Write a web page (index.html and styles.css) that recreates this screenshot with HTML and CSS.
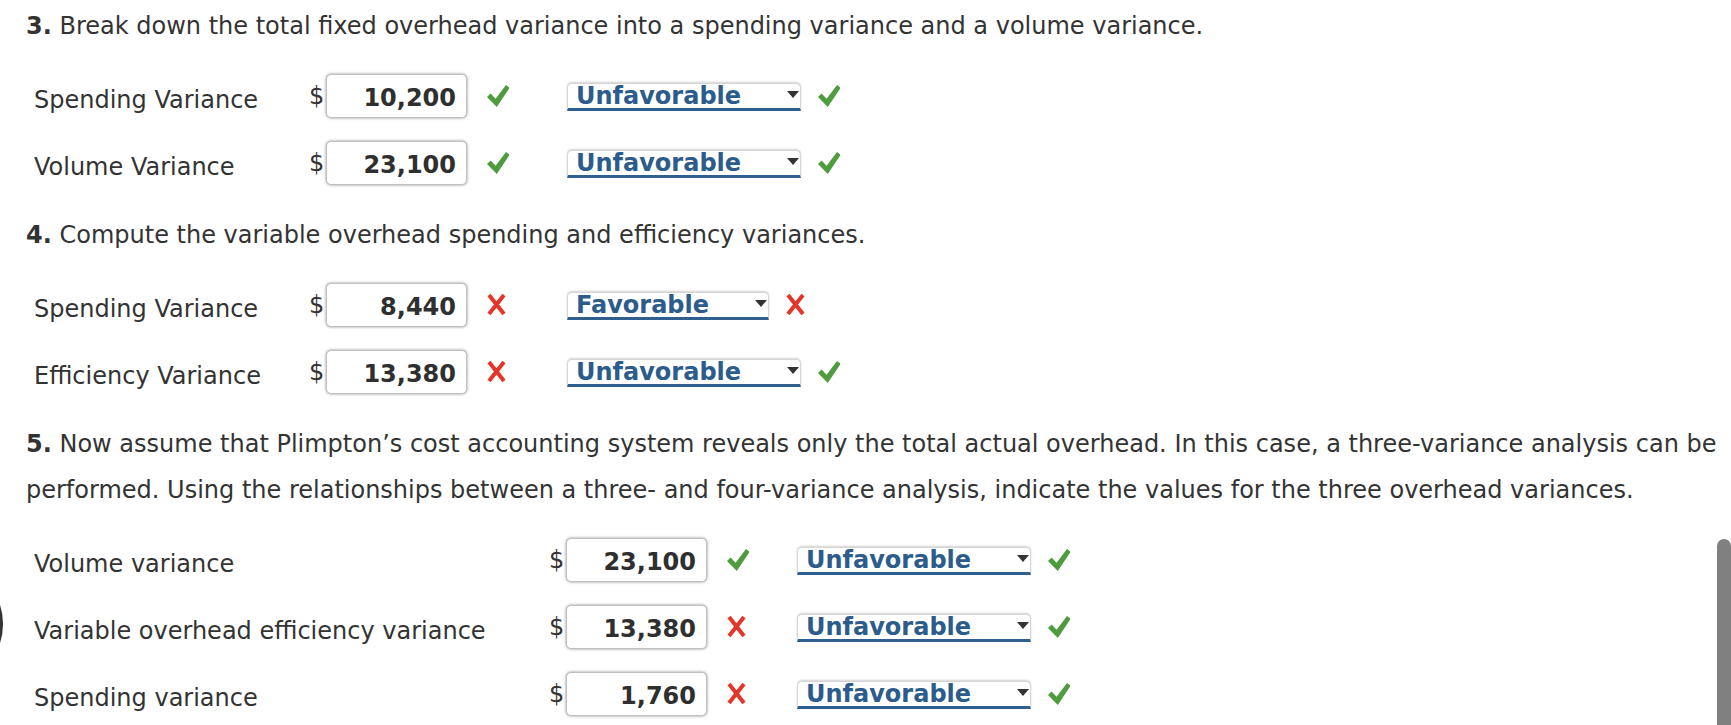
FILE: index.html
```html
<!DOCTYPE html>
<html lang="en">
<head>
<meta charset="utf-8">
<title>Variance analysis</title>
<link rel="stylesheet" href="styles.css">
</head>
<body>
<div class="cutoff"></div>
<div class="thumb"></div>
<div class="page">
  <p class="q"><b>3.</b> Break down the total fixed overhead variance into a spending variance and a volume variance.</p>
  <div class="rows s34">
    <div class="row">
      <span class="label">Spending Variance</span>
      <span class="cur">$</span>
      <span class="num">10,200</span>
      <span class="mark"><svg class="ok" viewBox="0 0 22 22"><polygon points="0,12 3.6,8.6 8.6,13.8 19,0 22.6,2.8 9.8,22"/></svg></span>
      <span class="sel"><span class="sel-text">Unfavorable</span><span class="arrow"></span></span>
      <span class="mark post"><svg class="ok" viewBox="0 0 22 22"><polygon points="0,12 3.6,8.6 8.6,13.8 19,0 22.6,2.8 9.8,22"/></svg></span>
    </div>
    <div class="row">
      <span class="label">Volume Variance</span>
      <span class="cur">$</span>
      <span class="num">23,100</span>
      <span class="mark"><svg class="ok" viewBox="0 0 22 22"><polygon points="0,12 3.6,8.6 8.6,13.8 19,0 22.6,2.8 9.8,22"/></svg></span>
      <span class="sel"><span class="sel-text">Unfavorable</span><span class="arrow"></span></span>
      <span class="mark post"><svg class="ok" viewBox="0 0 22 22"><polygon points="0,12 3.6,8.6 8.6,13.8 19,0 22.6,2.8 9.8,22"/></svg></span>
    </div>
  </div>

  <p class="q"><b>4.</b> Compute the variable overhead spending and efficiency variances.</p>
  <div class="rows s34">
    <div class="row">
      <span class="label">Spending Variance</span>
      <span class="cur">$</span>
      <span class="num">8,440</span>
      <span class="mark"><svg class="bad" viewBox="0 0 19 21"><path d="M2 1 L17 20 M17 1 L2 20"/></svg></span>
      <span class="sel"><span class="sel-text">Favorable</span><span class="arrow"></span></span>
      <span class="mark post"><svg class="bad" viewBox="0 0 19 21"><path d="M2 1 L17 20 M17 1 L2 20"/></svg></span>
    </div>
    <div class="row">
      <span class="label">Efficiency Variance</span>
      <span class="cur">$</span>
      <span class="num">13,380</span>
      <span class="mark"><svg class="bad" viewBox="0 0 19 21"><path d="M2 1 L17 20 M17 1 L2 20"/></svg></span>
      <span class="sel"><span class="sel-text">Unfavorable</span><span class="arrow"></span></span>
      <span class="mark post"><svg class="ok" viewBox="0 0 22 22"><polygon points="0,12 3.6,8.6 8.6,13.8 19,0 22.6,2.8 9.8,22"/></svg></span>
    </div>
  </div>

  <p class="q"><b>5.</b> Now assume that Plimpton’s cost accounting system reveals only the total actual overhead. In this case, a three-variance analysis can be<br>performed. Using the relationships between a three- and four-variance analysis, indicate the values for the three overhead variances.</p>
  <div class="rows s5">
    <div class="row">
      <span class="label">Volume variance</span>
      <span class="cur">$</span>
      <span class="num">23,100</span>
      <span class="mark"><svg class="ok" viewBox="0 0 22 22"><polygon points="0,12 3.6,8.6 8.6,13.8 19,0 22.6,2.8 9.8,22"/></svg></span>
      <span class="sel"><span class="sel-text">Unfavorable</span><span class="arrow"></span></span>
      <span class="mark post"><svg class="ok" viewBox="0 0 22 22"><polygon points="0,12 3.6,8.6 8.6,13.8 19,0 22.6,2.8 9.8,22"/></svg></span>
    </div>
    <div class="row">
      <span class="label">Variable overhead efficiency variance</span>
      <span class="cur">$</span>
      <span class="num">13,380</span>
      <span class="mark"><svg class="bad" viewBox="0 0 19 21"><path d="M2 1 L17 20 M17 1 L2 20"/></svg></span>
      <span class="sel"><span class="sel-text">Unfavorable</span><span class="arrow"></span></span>
      <span class="mark post"><svg class="ok" viewBox="0 0 22 22"><polygon points="0,12 3.6,8.6 8.6,13.8 19,0 22.6,2.8 9.8,22"/></svg></span>
    </div>
    <div class="row">
      <span class="label">Spending variance</span>
      <span class="cur">$</span>
      <span class="num">1,760</span>
      <span class="mark"><svg class="bad" viewBox="0 0 19 21"><path d="M2 1 L17 20 M17 1 L2 20"/></svg></span>
      <span class="sel"><span class="sel-text">Unfavorable</span><span class="arrow"></span></span>
      <span class="mark post"><svg class="ok" viewBox="0 0 22 22"><polygon points="0,12 3.6,8.6 8.6,13.8 19,0 22.6,2.8 9.8,22"/></svg></span>
    </div>
  </div>
</div>
</body>
</html>
```

FILE: styles.css
```css
html, body {
  margin: 0;
  padding: 0;
  background: #ffffff;
  overflow: hidden;
}
body {
  width: 1731px;
  height: 725px;
  position: relative;
  font-family: "DejaVu Sans", Verdana, sans-serif;
  font-size: 24px;
  color: #333333;
}
.page {
  padding: 3px 0 0 26px;
}
.q {
  margin: 0;
  line-height: 46px;
  white-space: nowrap;
}
.q b {
  font-weight: bold;
}
.rows {
  margin: 13px 0 16px 0;
  padding-left: 8px;
}
.row {
  display: flex;
  align-items: center;
  height: 67px;
}
.label {
  line-height: 30px;
  padding-top: 8px;
  white-space: nowrap;
}
.s34 .label { width: 275px; }
.s5 .label { width: 515px; }
.cur {
  width: 17px;
  line-height: 30px;
}
.num {
  box-sizing: border-box;
  width: 141px;
  height: 44px;
  border: 1px solid #c0c0c0;
  border-radius: 5px;
  box-shadow: 0 0 3px rgba(0, 0, 0, 0.45);
  background: #fff;
  padding: 4px 10px 0 0;
  line-height: 38px;
  text-align: right;
  font-weight: bold;
  color: #2f2f2f;
}
.mark {
  display: flex;
  align-items: center;
  width: 22px;
  height: 22px;
  margin-left: 20px;
}
.s34 .sel { margin-left: 58px; }
.s5 .sel { margin-left: 48px; }
.mark.post { margin-left: 17px; }
.ok {
  width: 22px;
  height: 22px;
  fill: #4f9c3f;
}
.bad {
  width: 19px;
  height: 21px;
  fill: none;
  stroke: #e5352a;
  stroke-width: 4;
}
.sel {
  display: flex;
  align-items: flex-start;
  height: 28px;
  box-sizing: border-box;
  border: 1px solid #d6d6d6;
  border-bottom: 3px solid #2f5f8f;
  border-radius: 5px 5px 0 0;
  box-shadow: 0 -1px 2px rgba(0, 0, 0, 0.18);
  background: #fff;
  padding: 0 1px 0 8px;
  margin-top: 2px;
}
.sel-text {
  line-height: 24px;
  font-weight: bold;
  color: #2b5c8c;
}
.arrow {
  margin: 7px 0 0 46px;
  width: 0;
  height: 0;
  border-left: 6px solid transparent;
  border-right: 6px solid transparent;
  border-top: 7px solid #333;
}
.thumb {
  position: absolute;
  left: 1717px;
  top: 539px;
  width: 14px;
  height: 200px;
  border-radius: 7px 7px 0 0;
  background: #808080;
}
.cutoff {
  position: absolute;
  left: -117px;
  top: 564px;
  width: 114px;
  height: 114px;
  border: 3px solid #333;
  border-radius: 50%;
}
```
